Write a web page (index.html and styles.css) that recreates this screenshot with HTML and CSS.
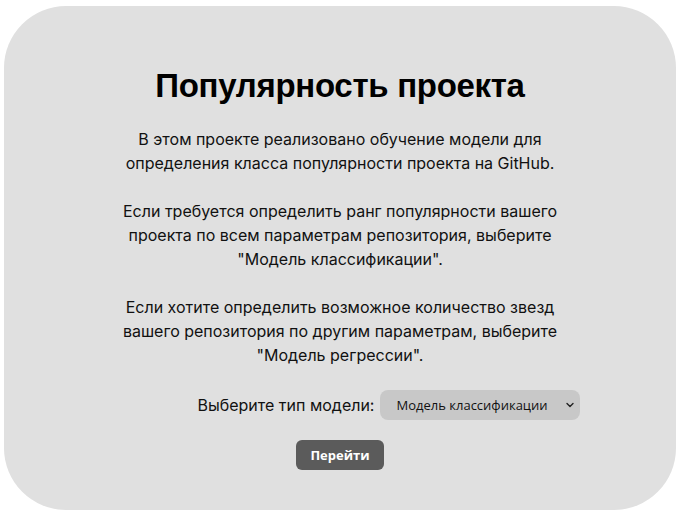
FILE: index.html
```html
<!DOCTYPE html>
<html lang="ru">
<head>
<meta charset="utf-8">
<title>Популярность проекта</title>
<link rel="stylesheet" href="styles.css">
</head>
<body>
<main class="card">
  <h1 class="title">Популярность проекта</h1>
  <div class="intro">
    <p>В этом проекте реализовано обучение модели для определения класса популярности проекта на GitHub.</p>
    <p>Если требуется определить ранг популярности вашего проекта по всем параметрам репозитория, выберите "Модель классификации".</p>
    <p>Если хотите определить возможное количество звезд вашего репозитория по другим параметрам, выберите "Модель регрессии".</p>
  </div>
  <form class="form">
    <div class="row">
      <label class="label" for="model">Выберите тип модели:</label>
      <div class="select-wrap">
        <select id="model" class="select">
          <option>Модель классификации</option>
          <option>Модель регрессии</option>
        </select>
        <svg class="chevron" width="8" height="6" viewBox="0 0 8 6" aria-hidden="true"><path d="M1 1.5 L4 4.5 L7 1.5" fill="none" stroke="#222" stroke-width="1.4" stroke-linecap="round" stroke-linejoin="round"/></svg>
      </div>
    </div>
    <button type="button" class="btn">Перейти</button>
  </form>
</main>
</body>
</html>
```

FILE: styles.css
```css
html, body {
  margin: 0;
  padding: 0;
  background: #ffffff;
}

body {
  padding: 6px 5px 7px 4px;
}

.card {
  box-sizing: border-box;
  width: 672px;
  height: 504px;
  background: #e0e0e0;
  border-radius: 62px;
  padding: 61px 0 0;
  display: flex;
  flex-direction: column;
  align-items: center;
}

.title {
  margin: 0;
  font-family: "Liberation Sans", Arial, sans-serif;
  font-weight: 700;
  font-size: 33px;
  letter-spacing: -0.3px;
  line-height: 38px;
  color: #000;
  text-align: center;
}

.intro {
  width: 460px;
  margin-top: 22px;
  font-family: Inter, "Noto Sans", sans-serif;
  font-size: 16px;
  line-height: 24px;
  color: #111;
  text-align: center;
}

.intro p {
  margin: 0 0 24px;
}

.intro p:last-child {
  margin-bottom: 0;
}

.form {
  margin-top: 23px;
  display: flex;
  flex-direction: column;
  align-items: center;
  gap: 20px;
  width: 100%;
}

.row {
  display: flex;
  align-items: center;
  justify-content: center;
  gap: 6px;
  padding-left: 98px;
}

.label {
  font-family: Inter, "Noto Sans", sans-serif;
  font-size: 16px;
  color: #111;
}

.select-wrap {
  position: relative;
}

.select {
  appearance: none;
  -webkit-appearance: none;
  width: 200px;
  height: 30px;
  border: none;
  border-radius: 8px;
  background: #c8c8c8;
  padding: 0 24px 0 16px;
  font-family: "Open Sans", "Noto Sans", sans-serif;
  font-size: 13px;
  color: #111;
  outline: none;
}

.chevron {
  position: absolute;
  right: 6px;
  top: 12px;
  pointer-events: none;
}

.btn {
  width: 88px;
  height: 30px;
  border: none;
  border-radius: 6px;
  background: #5b5b5b;
  color: #ffffff;
  font-family: "Open Sans", "Noto Sans", sans-serif;
  font-weight: 700;
  font-size: 13px;
  padding: 0;
}
```
